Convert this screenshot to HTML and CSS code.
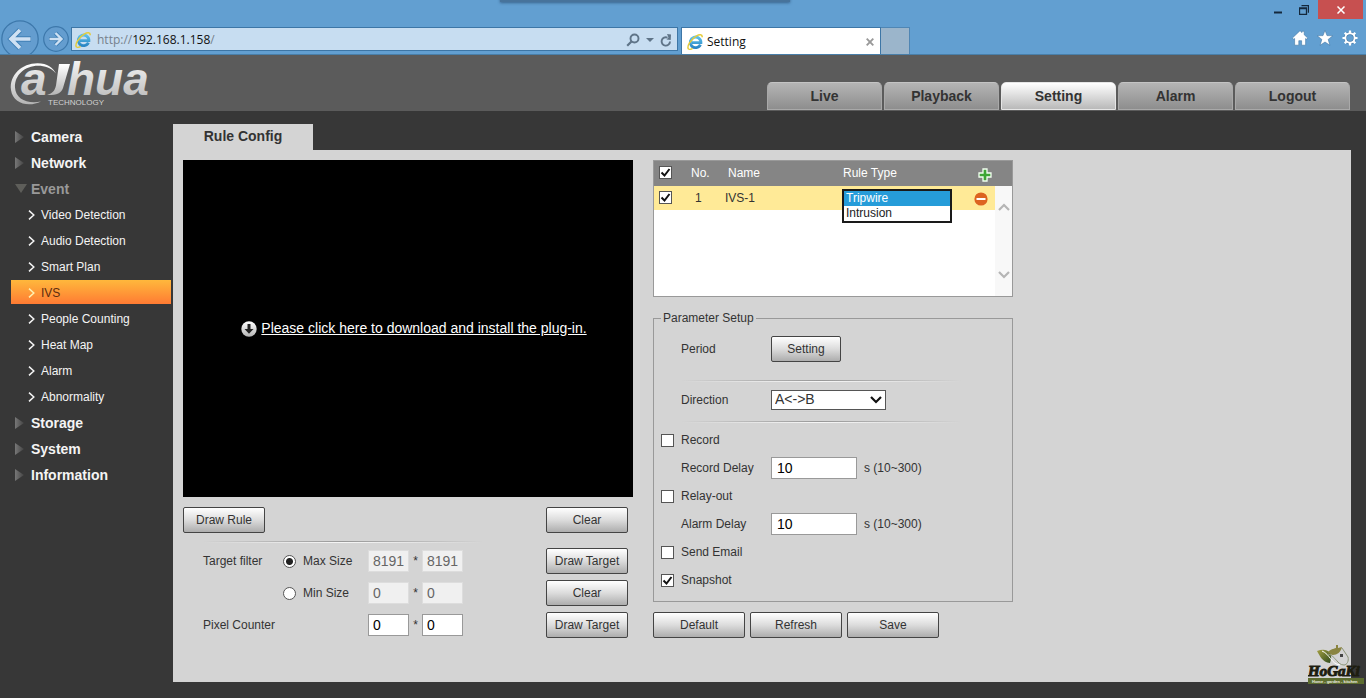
FILE: index.html
```html
<!DOCTYPE html>
<html lang="en">
<head>
<meta charset="utf-8">
<title>Setting</title>
<link rel="stylesheet" href="styles.css">
</head>
<body>
<svg class="defs" aria-hidden="true">
  <defs>
    <linearGradient id="silver" x1="0" y1="0" x2="0" y2="1"><stop offset="0" stop-color="#fff"/><stop offset="1" stop-color="#b4b4b4"/></linearGradient>
    <linearGradient id="ie" x1="0" y1="0" x2="0" y2="1"><stop offset="0" stop-color="#5cc0ea"/><stop offset="1" stop-color="#2b86c4"/></linearGradient>
    <linearGradient id="tri" x1="0" y1="0" x2="1" y2="0"><stop offset="0" stop-color="#777"/><stop offset="1" stop-color="#444"/></linearGradient>
    <linearGradient id="leaf" x1="0" y1="0" x2="1" y2="1"><stop offset="0" stop-color="#a5a043"/><stop offset="1" stop-color="#2f4a1c"/></linearGradient>
    <symbol id="ie-icon" viewBox="0 0 16 16">
      <path d="M13.4 10.6A5.3 5.3 0 1 1 13.9 8.6H5" fill="none" stroke="url(#ie)" stroke-width="2.9"/>
      <path d="M1.6 15.2C-.6 13 3.6 5.2 9.2 2.1 12.4.3 15.4.2 15.2 3.2" fill="none" stroke="#e5cc3b" stroke-width="1.5"/>
      <path d="M1.6 15.2q1.6.7 4-.8" fill="none" stroke="#e5cc3b" stroke-width="1.3"/>
    </symbol>
    <symbol id="chevron" viewBox="0 0 7 10"><path d="M1 .6l4.800 4.400L1 9.400" fill="none" stroke="currentColor" stroke-width="1.500"/></symbol>
    <symbol id="tri-right" viewBox="0 0 9 12"><path d="M0 0l9 6-9 6z" fill="url(#tri)"/></symbol>
    <symbol id="tri-down" viewBox="0 0 12 9"><path d="M0 0h12L6 9z" fill="#5e5e5a"/></symbol>
  </defs>
</svg>

<header class="chrome">
  <div class="window-shadow"></div>
  <button class="nav nav-back" aria-label="Back"><svg viewBox="0 0 38 38"><circle cx="19" cy="19" r="18.2" fill="#649dcf" stroke="#3d78ab" stroke-width="1.3"/><path d="M30 19H11M19 10L10 19l9 9" fill="none" stroke="#3f7fb5" stroke-width="5.400"/><path d="M29.500 19H11M19 10L10 19l9 9" fill="none" stroke="#cfe1f3" stroke-width="3.600"/></svg></button>
  <button class="nav nav-forward" aria-label="Forward"><svg viewBox="0 0 26 26"><circle cx="13" cy="13" r="12.3" fill="#649dcf" stroke="#3d78ab" stroke-width="1.2"/><path d="M6 13h12M12.500 7l6 6-6 6" fill="none" stroke="#3f7fb5" stroke-width="4"/><path d="M6.500 13H18M12.500 7l6 6-6 6" fill="none" stroke="#cfe1f3" stroke-width="2.400"/></svg></button>
  <div class="address">
    <svg class="ie"><use href="#ie-icon"/></svg>
    <div class="url" role="textbox" aria-label="Address" contenteditable="true" spellcheck="false"><span>http://</span>192.168.1.158<span>/</span></div>
    <button class="tool" aria-label="Search"><svg width="14" height="14" viewBox="0 0 14 14"><circle cx="8.5" cy="5.5" r="4" fill="none" stroke="#5f7488" stroke-width="1.9"/><path d="M5.7 8.3L1.2 12.8" stroke="#5f7488" stroke-width="2.2"/></svg></button>
    <button class="tool" aria-label="Address history"><svg width="8" height="4" viewBox="0 0 8 4"><path d="M0 0h8L4 4z" fill="#5f7488"/></svg></button>
    <button class="tool" aria-label="Reload"><svg width="12" height="13" viewBox="0 0 12 13"><path d="M7.5 3.6A4.200 4.200 0 1 0 10 7.500" fill="none" stroke="#5f7488" stroke-width="1.9"/><path d="M7 0l4 .5-.3 5.500-4.200-.500 2-2z" fill="#5f7488"/></svg></button>
  </div>
  <div class="page-tab">
    <svg class="ie"><use href="#ie-icon"/></svg>
    <span>Setting</span>
    <button class="tool" aria-label="Close tab"><svg width="8" height="8" viewBox="0 0 8 8"><path d="M.7.7l6.600 6.600M7.300.7L.7 7.300" stroke="#999" stroke-width="1.9"/></svg></button>
  </div>
  <button class="new-tab" aria-label="New tab"></button>
  <div class="chrome-right">
    <div class="window-controls">
      <button class="tool" aria-label="Minimize"><svg width="8" height="8" viewBox="0 0 8 8"><path d="M0 6.5h8" stroke="#14283c" stroke-width="2"/></svg></button>
      <button class="tool" aria-label="Restore"><svg width="10" height="10" viewBox="0 0 10 10"><path d="M.5 3h7v6.5h-7zM.5 3.5h7M2.5.7h7v7" fill="none" stroke="#14283c" stroke-width="1.3"/></svg></button>
      <button class="window-close" aria-label="Close"><svg width="8" height="8" viewBox="0 0 8 8"><path d="M.5.5l7 7M7.500.5l-7 7" stroke="#fff" stroke-width="1.5"/></svg></button>
    </div>
    <div class="chrome-icons">
      <button class="tool" aria-label="Home"><svg width="16" height="16" viewBox="0 0 16 16"><path d="M8 .7l2 1.900V1.300h2.200v3.400l3.500 3.300-1.200 1.300-.9-.8V15.200H9.600v-4.500H6.800v4.500H2.600V8.500l-.9.8L.4 8z" fill="#fff" stroke="#4377a5" stroke-width=".6"/></svg></button>
      <button class="tool" aria-label="Favorites"><svg width="16" height="16" viewBox="0 0 16 16"><path d="M8 .3l2 5.300 5.800.2-4.600 3.600 1.700 5.900L8 12l-4.900 3.300 1.700-5.900L.2 5.800 6 5.600z" fill="#fff" stroke="#4377a5" stroke-width=".6"/></svg></button>
      <button class="tool" aria-label="Tools"><svg width="16" height="16" viewBox="0 0 16 16"><circle cx="8" cy="8" r="4.700" fill="none" stroke="#4377a5" stroke-width="3.200"/><circle cx="8" cy="8" r="4.700" fill="none" stroke="#fff" stroke-width="2"/><path d="M8 .5v2.500M8 13v2.500M.5 8H3M13 8h2.500M2.700 2.700l1.800 1.800M11.500 11.500l1.800 1.800M2.700 13.300l1.800-1.800M11.500 4.500l1.800-1.800" stroke="#fff" stroke-width="2.200"/></svg></button>
    </div>
  </div>
</header>

<div class="masthead">
  <svg class="logo" viewBox="0 0 144 44" role="img" aria-label="Dahua Technology">
    <path d="M32 39.5C20 45.5 4 42 2 28 0 13 13 1.2 28.5 1.2c10 0 15.500 4.300 18.500 10.300C42 5.800 36 3.800 29 3.800 16 3.800 5.500 13 6 25.500c.5 11.500 12.500 17 26 14z" fill="url(#silver)"/>
    <text class="logo-name" x="12" y="33" fill="url(#silver)">a</text>
    <path d="M50 2h11L54 26c-1.800 5.500-6.500 7.200-16 7 6-2 7.500-4 9-9.500z" fill="url(#silver)"/>
    <text class="logo-name" x="58" y="33" fill="url(#silver)">hua</text>
    <text class="logo-sub" x="39" y="43" fill="#d2d2d2">TECHNOLOGY</text>
  </svg>
  <nav class="top-tabs">
    <a href="#live">Live</a>
    <a href="#playback">Playback</a>
    <a href="#setting" class="active">Setting</a>
    <a href="#alarm">Alarm</a>
    <a href="#logout">Logout</a>
  </nav>
</div>

<div class="workspace">
  <nav class="side">
    <a class="group" href="#camera"><svg><use href="#tri-right"/></svg>Camera</a>
    <a class="group" href="#network"><svg><use href="#tri-right"/></svg>Network</a>
    <a class="group open" href="#event"><svg><use href="#tri-down"/></svg>Event</a>
    <a class="item" href="#video"><svg><use href="#chevron"/></svg>Video Detection</a>
    <a class="item" href="#audio"><svg><use href="#chevron"/></svg>Audio Detection</a>
    <a class="item" href="#smart"><svg><use href="#chevron"/></svg>Smart Plan</a>
    <a class="item current" href="#ivs"><svg><use href="#chevron"/></svg>IVS</a>
    <a class="item" href="#people"><svg><use href="#chevron"/></svg>People Counting</a>
    <a class="item" href="#heat"><svg><use href="#chevron"/></svg>Heat Map</a>
    <a class="item" href="#alarm-event"><svg><use href="#chevron"/></svg>Alarm</a>
    <a class="item" href="#abnormality"><svg><use href="#chevron"/></svg>Abnormality</a>
    <a class="group" href="#storage"><svg><use href="#tri-right"/></svg>Storage</a>
    <a class="group" href="#system"><svg><use href="#tri-right"/></svg>System</a>
    <a class="group" href="#information"><svg><use href="#tri-right"/></svg>Information</a>
  </nav>

  <main class="main">
    <h1 class="panel-tab">Rule Config</h1>
    <div class="panel">
      <section class="preview">
        <div class="video">
          <svg width="16" height="16" viewBox="0 0 16 16"><circle cx="8" cy="8" r="7.7" fill="url(#silver)"/><path d="M6.5 3h3v5h3L8 12.800 3.500 8h3z" fill="#222"/></svg>
          <a href="#plugin">Please click here to download and install the plug-in.</a>
        </div>
        <div class="draw-bar">
          <button class="btn">Draw Rule</button>
          <button class="btn">Clear</button>
        </div>
        <div class="rule-line"></div>
        <div class="filters">
          <div class="filter-row">
            <span class="caption">Target filter</span>
            <label class="choice"><input type="radio" name="size" checked>Max Size</label>
            <input class="box small" value="8191" aria-label="Max width" disabled><span class="times">*</span><input class="box small" value="8191" aria-label="Max height" disabled>
            <button class="btn">Draw Target</button>
          </div>
          <div class="filter-row">
            <span class="caption"></span>
            <label class="choice"><input type="radio" name="size">Min Size</label>
            <input class="box small" value="0" aria-label="Min width" disabled><span class="times">*</span><input class="box small" value="0" aria-label="Min height" disabled>
            <button class="btn">Clear</button>
          </div>
          <div class="filter-row">
            <label class="caption wide" for="pixel-w">Pixel Counter</label>
            <input class="box small" id="pixel-w" value="0"><span class="times">*</span><input class="box small" value="0" aria-label="Pixel height">
            <button class="btn">Draw Target</button>
          </div>
        </div>
      </section>

      <section class="rules">
        <div class="rule-list">
          <table>
            <thead>
              <tr><th class="c-check"><input type="checkbox" aria-label="Select all" checked></th><th class="c-no">No.</th><th class="c-name">Name</th><th class="c-type">Rule Type</th>
              <th class="c-act"><button class="tool" aria-label="Add rule"><svg width="14" height="14" viewBox="0 0 14 14"><path d="M5 1h4v4h4v4H9v4H5V9H1V5h4z" fill="#3fa535" stroke="#f2fff0" stroke-width="1.300"/></svg></button></th></tr>
            </thead>
            <tbody>
              <tr><td class="c-check"><input type="checkbox" aria-label="Select IVS-1" checked></td><td class="c-no">1</td><td class="c-name">IVS-1</td>
              <td class="c-type"><select class="type-list" size="2" aria-label="Rule Type"><option selected>Tripwire</option><option>Intrusion</option></select></td>
              <td class="c-act"><button class="tool" aria-label="Remove rule"><svg width="14" height="14" viewBox="0 0 14 14"><circle cx="7" cy="7" r="6.6" fill="#dd6420"/><path d="M2.500 7h9" stroke="#fff" stroke-width="2"/></svg></button></td></tr>
            </tbody>
          </table>
          <div class="scroll" aria-hidden="true">
            <svg width="12" height="8" viewBox="0 0 12 8"><path d="M1 7l5-5 5 5" fill="none" stroke="#b5b5b5" stroke-width="2.2"/></svg>
            <svg width="12" height="8" viewBox="0 0 12 8"><path d="M1 1l5 5 5-5" fill="none" stroke="#b5b5b5" stroke-width="2.2"/></svg>
          </div>
        </div>

        <fieldset>
          <legend>Parameter Setup</legend>
          <div class="param period"><span class="name">Period</span><button class="btn compact">Setting</button></div>
          <div class="rule-line"></div>
          <div class="param direction"><label class="name" for="direction">Direction</label><select id="direction" class="direction-select"><option>A&lt;-&gt;B</option></select></div>
          <div class="rule-line"></div>
          <div class="options">
            <label class="param tick"><input type="checkbox">Record</label>
            <div class="param"><label class="name" for="rec-delay">Record Delay</label><input class="box" id="rec-delay" value="10"><span class="range">s (10~300)</span></div>
            <label class="param tick"><input type="checkbox">Relay-out</label>
            <div class="param"><label class="name" for="alarm-delay">Alarm Delay</label><input class="box" id="alarm-delay" value="10"><span class="range">s (10~300)</span></div>
            <label class="param tick"><input type="checkbox">Send Email</label>
            <label class="param tick"><input type="checkbox" checked>Snapshot</label>
          </div>
        </fieldset>
        <div class="actions">
          <button class="btn">Default</button>
          <button class="btn">Refresh</button>
          <button class="btn">Save</button>
        </div>
      </section>
    </div>
  </main>
</div>

<svg class="watermark" viewBox="0 0 58 42" role="img" aria-label="HoGaKi">
  <path d="M9 7c5-2 10-2 13 2 2 4 1 7 0 10C14 18 12 12 9 7z" fill="url(#leaf)"/>
  <path d="M20 8c3-3 5-3 8-4V1h2v3l4-1c-1 5-5 8-9 8-2 0-3-1-5-3z" fill="#8a8440"/>
  <path d="M34 4l6 9c1 4-1 8-4 8-7 0-8-9-16-11" fill="none" stroke="#8c9478" stroke-width="1"/>
  <path d="M14 7c8 3 9 13 18 14" fill="none" stroke="#fff" stroke-width="1"/>
  <path d="M32 10h3v3h-3z" fill="#444"/>
  <text class="mark-name" x="0" y="32">HoGaKi</text>
  <path d="M0 34h56v6H0z" fill="#5d6d2f"/>
  <text class="mark-sub" x="4" y="39">Home - garden - kitchen</text>
</svg>
</body>
</html>
```
FILE: styles.css
```css
* { box-sizing: border-box; }

body {
  margin: 0;
  min-height: 100vh;
  display: flex;
  flex-direction: column;
  position: relative;
  background: #373737;
  color: #333;
  font: 12px/16px "Liberation Sans", Arial, sans-serif;
}

button, input, select { font: inherit; color: inherit; margin: 0; }
a { color: inherit; text-decoration: none; }
svg { display: block; flex: none; }
.defs { position: absolute; width: 0; height: 0; }
.tool { border: 0; padding: 0; background: none; display: block; }

/* Browser frame */
.chrome {
  position: relative;
  display: flex;
  align-items: flex-end;
  height: 55px;
  overflow: hidden;
  background: #629fd1;
  border-bottom: 1px solid #497fa9;
  color: #111;
  font-family: "Open Sans", "Noto Sans", sans-serif;
}
.window-shadow {
  position: absolute;
  top: -6px;
  left: 500px;
  width: 290px;
  height: 8px;
  background: #47739b;
  box-shadow: 0 1px 3px #3a648c;
}
.nav { flex: none; border: 0; padding: 0; background: none; }
.nav svg { width: 100%; height: 100%; }
.nav-back { width: 38px; height: 38px; margin: 0 4px -4px 1px; }
.nav-forward { width: 26px; height: 26px; margin: 0 2px 2px 0; }
.address {
  flex: 0 1 607px;
  display: flex;
  align-items: center;
  gap: 6px;
  height: 24px;
  margin: 0 3px 3px 0;
  padding: 2px 5px 0 3px;
  border: 1px solid #3d76a6;
  background: #c7ddf1;
}
.ie { width: 16px; height: 16px; }
.url { flex: 1; font-size: 12px; outline: 0; }
.url span { color: #76818c; }
.page-tab {
  flex: 0 0 200px;
  display: flex;
  align-items: center;
  gap: 4px;
  height: 27px;
  padding: 2px 6px 0 5px;
  border: 1px solid #3d76a6;
  border-bottom: 0;
  background: #fff;
}
.page-tab span { flex: 1; }
.new-tab {
  flex: 0 0 29px;
  height: 27px;
  border: 1px solid #4f86b4;
  border-width: 1px 1px 0 0;
  background: #9bb5cb;
}
.chrome-right {
  flex: 1;
  align-self: stretch;
  display: flex;
  flex-direction: column;
  align-items: flex-end;
  justify-content: space-between;
}
.window-controls { display: flex; align-items: center; gap: 17px; padding-right: 3px; }
.window-close {
  display: grid;
  place-items: center;
  width: 45px;
  height: 19px;
  margin-left: -8px;
  border: 0;
  background: #c75050;
}
.chrome-icons { display: flex; gap: 9px; padding: 0 8px 8px 0; }

/* Masthead */
.masthead {
  display: flex;
  justify-content: space-between;
  align-items: flex-end;
  height: 56px;
  padding: 0 16px 1px 9px;
  background: #5b5b5b;
}
.logo { width: 144px; height: 44px; margin-bottom: 4px; overflow: visible; }
.logo-name { font: italic bold 46px "Liberation Sans", Arial, sans-serif; }
.logo-sub { font: 8px "Liberation Sans", Arial, sans-serif; }
.top-tabs { display: flex; gap: 2px; }
.top-tabs a {
  width: 115px;
  height: 28px;
  border-radius: 5px 5px 0 0;
  background: linear-gradient(#b5b5b5, #8e8e8e);
  border: 1px solid #a9a9a9;
  border-top-color: #c4c4c4;
  font: bold 14px/27px "Liberation Sans", Arial, sans-serif;
  text-align: center;
}
.top-tabs .active { background: linear-gradient(#fff, #b9b9b9); border-color: #e6e6e6; }

/* Side menu */
.workspace { flex: 1; display: flex; padding: 13px 15px 16px 0; }
.side { flex: 0 0 173px; display: flex; flex-direction: column; gap: 2px; padding: 0 2px 0 11px; color: #f4f4f4; }
.side a { display: flex; align-items: center; height: 24px; padding-top: 1px; }
.side .group { padding-left: 4px; font-size: 14px; font-weight: bold; }
.side .group svg { width: 9px; height: 12px; margin-right: 7px; }
.side .group.open { color: #999; }
.side .group.open svg { width: 12px; height: 9px; margin-right: 4px; }
.side .item { padding-left: 17px; }
.side .item svg { width: 7px; height: 10px; margin-right: 6px; }
.side .current { background: linear-gradient(#ffb83c, #ff7b33); color: #5c2c10; }
.side .current svg { color: #fff0b0; }

/* Panel */
.main { flex: 1; display: flex; flex-direction: column; }
.panel-tab {
  align-self: flex-start;
  width: 140px;
  margin: 0;
  padding-bottom: 2px;
  background: #d4d4d4;
  font-size: 14px;
  line-height: 24px;
  text-align: center;
}
.panel { flex: 1; display: flex; align-items: flex-start; gap: 20px; padding: 10px; background: #d4d4d4; }
.preview { flex: 0 0 450px; }
.rules { flex: 0 0 360px; }

.btn {
  width: 82px;
  height: 26px;
  padding: 0;
  border: 1px solid #444;
  border-radius: 2px;
  background: linear-gradient(#fff, #dcdcdc 50%, #adadad);
  text-align: center;
  white-space: nowrap;
}
.btn.compact { width: 70px; }

.rule-line {
  height: 2px;
  background:
    linear-gradient(90deg, transparent, #999, transparent) top / 100% 1px no-repeat,
    linear-gradient(90deg, transparent, #f6f6f6, transparent) bottom / 100% 1px no-repeat;
}

.video {
  display: flex;
  align-items: center;
  justify-content: center;
  gap: 4px;
  height: 337px;
  padding-left: 12px;
  background: #000;
  color: #fff;
  font-size: 14px;
}
.video a { padding-bottom: 2px; text-decoration: underline; }
.draw-bar { display: flex; justify-content: space-between; padding: 10px 5px 8px 0; }
.preview .rule-line { width: 280px; margin-left: 20px; }
.filters { display: flex; flex-direction: column; gap: 6px; padding: 5px 5px 0 20px; }
.filter-row { display: flex; align-items: center; }
.filter-row .btn { margin-left: auto; }
.caption { flex: 0 0 80px; }
.caption.wide { flex-basis: 165px; }
.choice { flex: 0 0 85px; display: flex; align-items: center; gap: 7px; }
.times { width: 13px; text-align: center; }

/* Form controls */
.box {
  width: 86px;
  height: 22px;
  padding: 0 5px;
  border: 1px solid #999;
  border-radius: 0;
  background: #fff;
  color: #000;
  font-size: 14px;
}
.box.small { width: 41px; padding: 0 4px; }
.box:disabled { border-color: #ddd; background: #f0f0f0; color: #666; }

input[type="checkbox"], input[type="radio"] {
  appearance: none;
  flex: none;
  display: block;
  width: 13px;
  height: 13px;
  border: 1px solid #555;
  background: #fff;
}
input[type="radio"] { border-radius: 50%; }
input[type="radio"]:checked { background: radial-gradient(#222 3px, #fff 4px); }
input[type="checkbox"]:checked {
  background: #fff url("data:image/svg+xml,%3Csvg xmlns='http://www.w3.org/2000/svg' viewBox='0 0 11 11'%3E%3Cpath d='M1.5 5.5l3 3L9.5 2' fill='none' stroke='%23111' stroke-width='2'/%3E%3C/svg%3E") center / 11px 11px no-repeat;
}

/* Rule list */
.rule-list { position: relative; height: 137px; border: 1px solid #999; background: #fff; }
.rule-list table { width: 100%; border-collapse: collapse; table-layout: fixed; }
.rule-list th { height: 25px; padding: 0 0 2px; background: #858585; color: #fff; font-weight: normal; text-align: left; }
.rule-list td { height: 24px; padding: 0; background: #ffea97; }
.rule-list .c-check { width: 37px; padding: 0 0 2px 5px; }
.c-no { width: 37px; }
.c-name { width: 115px; }
.c-type { width: 131px; position: relative; }
.rule-list td.c-no { padding-left: 4px; }
.rule-list td.c-name { text-indent: -3px; }
.rule-list th.c-act { padding: 3px 0 0 4px; }
.rule-list td.c-act { padding: 2px 0 0; }
.type-list {
  position: absolute;
  z-index: 1;
  top: 3px;
  left: -1px;
  width: 110px;
  height: 34px;
  padding: 0;
  overflow: hidden;
  border: 2px solid #1a1a1a;
  border-radius: 0;
  outline: 0;
  background: #fff;
  color: #222;
}
.type-list option { min-height: 15px; padding: 0 2px; line-height: 15px; }
.type-list option:checked { background: linear-gradient(#269cd9, #269cd9); color: #fff; }
.scroll {
  position: absolute;
  top: 25px;
  right: 0;
  bottom: 0;
  width: 17px;
  display: flex;
  flex-direction: column;
  align-items: center;
  justify-content: space-between;
  padding: 17px 0;
  background: #f8f8f8;
}

/* Parameters */
fieldset { margin: 13px 0 0; padding: 10px 7px 7px; border: 1px solid #999; }
legend { padding: 0 2px; margin-left: 0; }
.param { display: flex; align-items: center; height: 28px; padding-left: 20px; }
.param .name { flex: 0 0 90px; }
.param.period { height: 26px; }
.param.direction { height: 20px; margin: 8px 0 11px; }
.param.tick { gap: 7px; padding-left: 0; }
.range { margin-left: 7px; }
fieldset .rule-line { width: 280px; margin-left: 20px; }
.period + .rule-line { margin-top: 18px; }
.options { padding-top: 3px; }
.direction-select {
  appearance: none;
  width: 115px;
  height: 20px;
  padding: 0 4px 2px 3px;
  border: 1px solid #555;
  border-radius: 0;
  background: #fff url("data:image/svg+xml,%3Csvg xmlns='http://www.w3.org/2000/svg' viewBox='0 0 12 8'%3E%3Cpath d='M1 1l5 5 5-5' fill='none' stroke='%23111' stroke-width='2.2'/%3E%3C/svg%3E") right 3px center / 12px 8px no-repeat;
  font-size: 14px;
}
.actions { display: flex; gap: 5px; margin-top: 10px; }
.actions .btn { width: 92px; }

/* Corner mark */
.watermark { position: absolute; right: 0; bottom: 12px; width: 58px; height: 42px; }
.mark-name { font: italic bold 15px "Liberation Serif", serif; fill: #1d1d10; stroke: #1d1d10; stroke-width: 1px; }
.mark-sub { font: bold 4px "Liberation Sans", sans-serif; fill: #f0f0e0; }
```
